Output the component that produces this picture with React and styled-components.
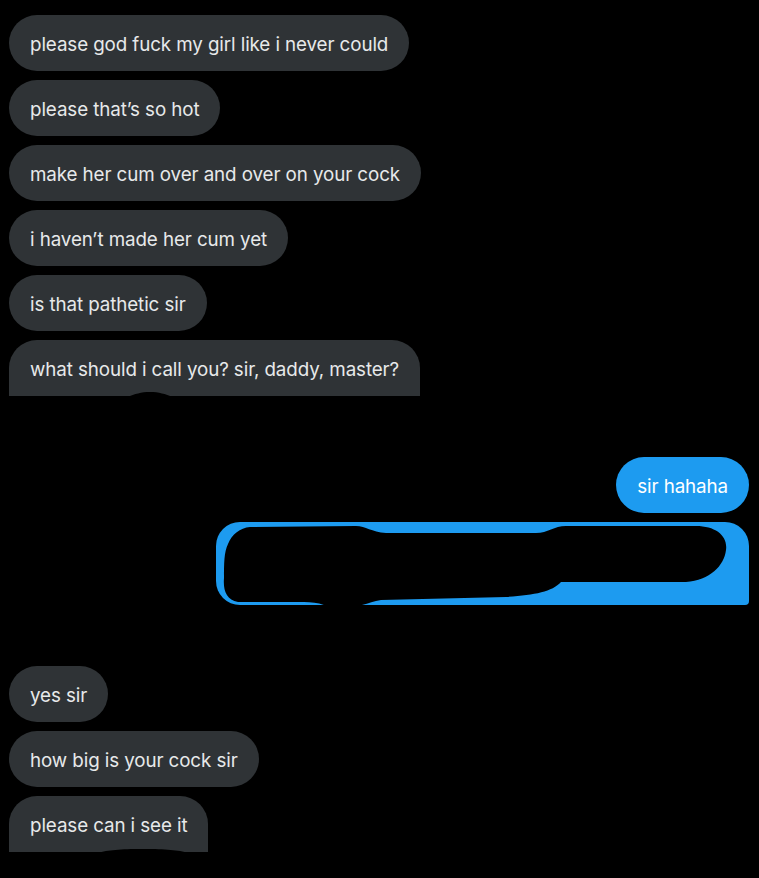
import React from 'react'
import styled, { createGlobalStyle } from 'styled-components'

const Global = createGlobalStyle`
  html, body {
    margin: 0;
    background: #000;
  }
  body {
    font-family: Inter, "Noto Sans", "Liberation Sans", sans-serif;
  }
`

const Thread = styled.main`
  display: flex;
  flex-direction: column;
  gap: 61px;
  padding: 15px 10px 0 9px;
  min-height: 878px;
  box-sizing: border-box;
  overflow: hidden;
`

const Group = styled.section`
  display: flex;
  flex-direction: column;
  align-items: ${(p) => (p.mine ? 'flex-end' : 'flex-start')};
  gap: 9px;
`

const Bubble = styled.div`
  position: relative;
  box-sizing: border-box;
  height: 56px;
  padding: 17px 21px 14px;
  font-size: 18.8px;
  line-height: 25px;
  letter-spacing: -0.1px;
  color: ${(p) => (p.mine ? '#ffffff' : '#e7e9ea')};
  background: ${(p) => (p.mine ? '#1d9bf0' : '#2f3336')};
  border-radius: ${(p) => (p.cut ? '28px 28px 0 0' : '28px')};
  white-space: nowrap;
`

const Redacted = styled.div`
  position: relative;
  width: 533px;
  height: 83px;
  background: #1d9bf0;
  border-radius: 24px 24px 4px 24px;
  overflow: hidden;
`

const Scribble = styled.svg`
  position: absolute;
  inset: 0;
  width: 100%;
  height: 100%;
`

const Blob = styled.svg`
  position: absolute;
  bottom: -1px;
  left: ${(p) => p.left}px;
`

export default function App() {
  return (
    <>
      <Global />
      <Thread>
        <Group>
          <Bubble>please god fuck my girl like i never could</Bubble>
          <Bubble>please that’s so hot</Bubble>
          <Bubble>make her cum over and over on your cock</Bubble>
          <Bubble>i haven’t made her cum yet</Bubble>
          <Bubble>is that pathetic sir</Bubble>
          <Bubble cut>
            what should i call you? sir, daddy, master?
            <Blob left={118} width="46" height="5" viewBox="0 0 46 5">
              <path d="M0 5 C8 2 14 0 23 0 C32 0 38 2 46 5 Z" fill="#000" />
            </Blob>
          </Bubble>
        </Group>
        <Group mine>
          <Bubble mine>sir hahaha</Bubble>
          <Redacted>
            <Scribble viewBox="0 0 533 83" preserveAspectRatio="none">
              <path
                d="M34 5 L140 4 C150 4 155 10 170 11 L320 11 C332 11 338 4 350 4 L480 4
                   C500 4 512 14 510 28 C508 44 494 58 470 60 L345 60
                   C336 70 318 73 290 75 L165 78 C156 79 150 83 140 84 L110 84
                   C104 81 96 80 88 80 L22 80 C10 78 7 68 8 56 C8 42 8 30 12 22
                   C16 12 24 6 34 5 Z"
                fill="#000"
              />
            </Scribble>
          </Redacted>
        </Group>
        <Group>
          <Bubble>yes sir</Bubble>
          <Bubble>how big is your cock sir</Bubble>
          <Bubble cut>
            please can i see it
            <Blob left={88} width="92" height="5" viewBox="0 0 92 5">
              <path d="M0 5 C12 2 22 1 46 1 C70 1 80 2 92 5 Z" fill="#000" />
            </Blob>
          </Bubble>
        </Group>
      </Thread>
    </>
  )
}
